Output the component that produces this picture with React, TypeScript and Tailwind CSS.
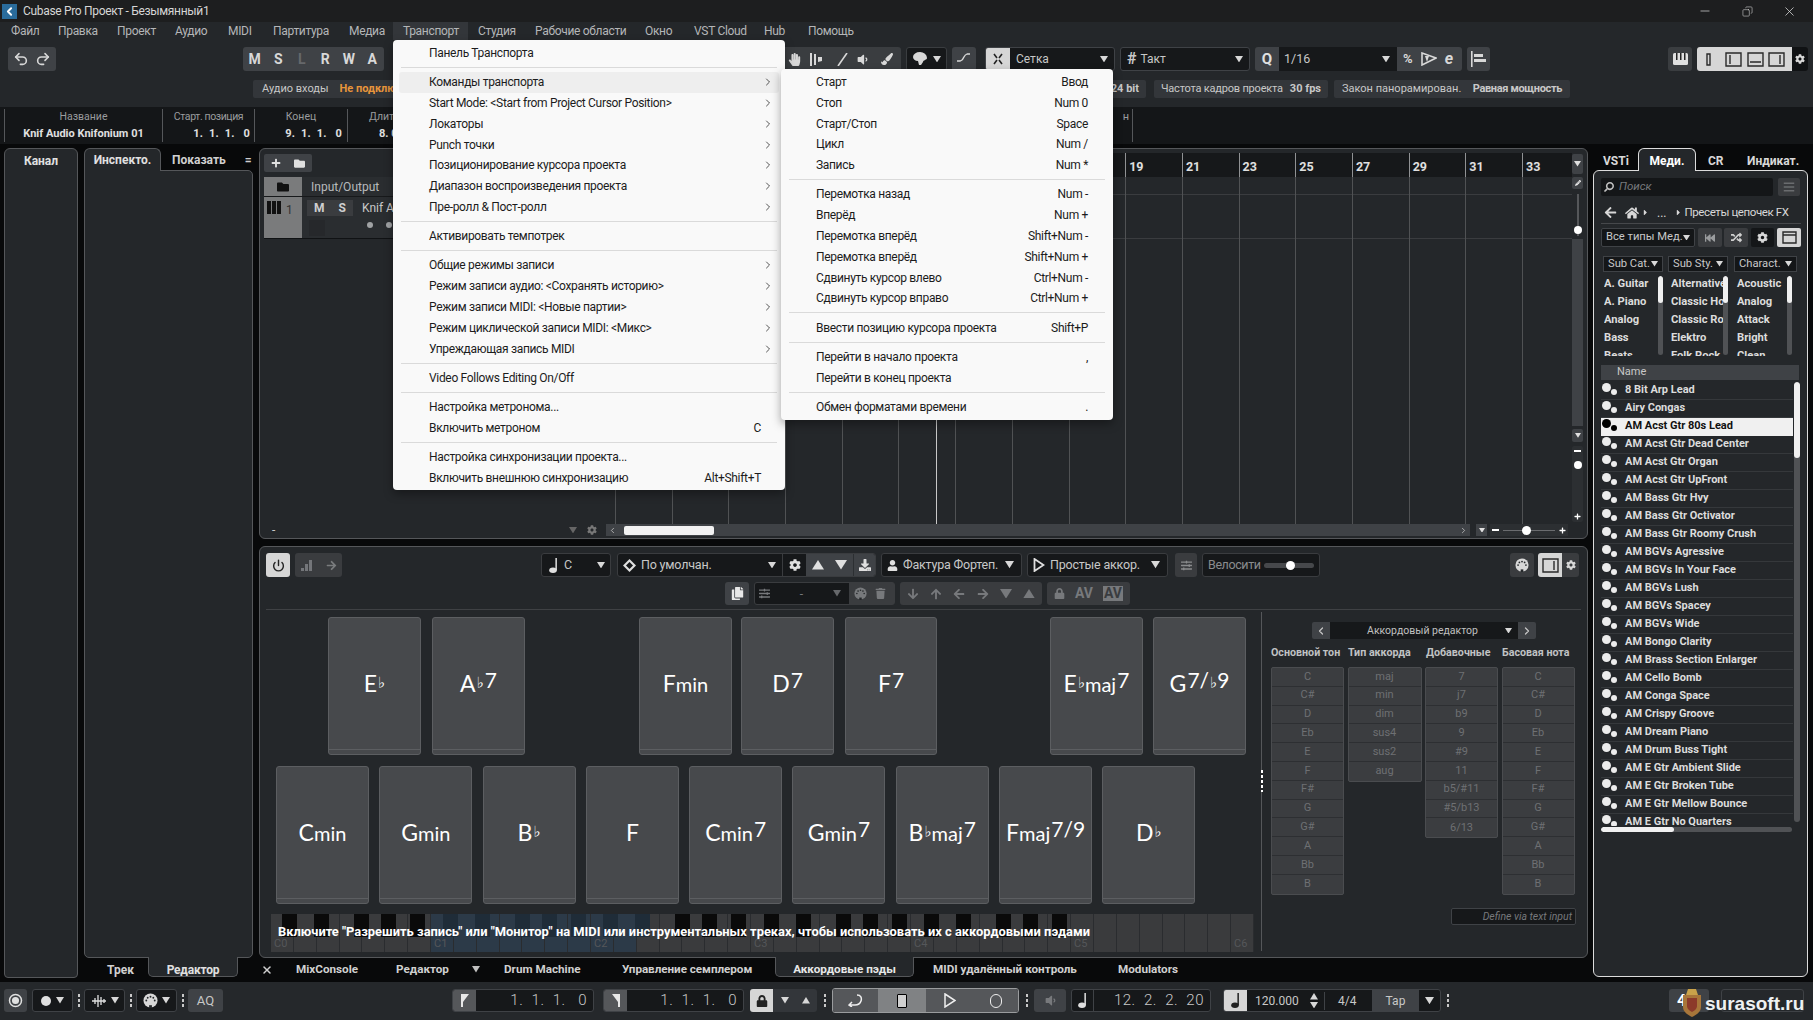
import React from "react";
import { Undo2, Redo2, Power, ChevronRight, X, Minus, Copy, ChevronLeft } from "lucide-react";
import { FaHandPaper, FaPencilAlt, FaVolumeDown, FaCog, FaHome, FaArrowLeft, FaArrowUp, FaArrowDown, FaArrowRight, FaLock, FaRandom, FaFastBackward, FaTrash, FaUser, FaPlus, FaFolder, FaCopy, FaDownload, FaSearch, FaCaretRight, FaBars, FaSlidersH, FaPaintBrush } from "react-icons/fa";

const Tri = ({ c = "#d8d8d8", up = false, s = 8 }: { c?: string; up?: boolean; s?: number }) => (
  <svg width={s} height={s * 0.8} viewBox="0 0 10 8" className="shrink-0"><path d={up ? "M5 0 10 8 0 8z" : "M0 0 10 0 5 8z"} fill={c} /></svg>
);
const Dots = () => (
  <span className="flex flex-col gap-[2px] w-[4px] items-center shrink-0">
    <i className="w-[2px] h-[3px] bg-[#c8c8c8]" /><i className="w-[2px] h-[3px] bg-[#c8c8c8]" /><i className="w-[2px] h-[3px] bg-[#c8c8c8]" />
  </span>
);
const Midi = ({ s = 16, c = "#d8d8d8" }: { s?: number; c?: string }) => (
  <svg width={s} height={s} viewBox="0 0 16 16"><circle cx="8" cy="8" r="7.5" fill={c} /><g fill="#25282b"><circle cx="3.5" cy="8" r="1" /><circle cx="12.5" cy="8" r="1" /><circle cx="5" cy="5" r="1" /><circle cx="11" cy="5" r="1" /><circle cx="8" cy="4" r="1" /></g><rect x="6.5" y="13" width="3" height="3" fill="#25282b" /></svg>
);
const Note = ({ c = "#e0e0e0", h = 16 }: { c?: string; h?: number }) => (
  <svg width={h * 0.6} height={h} viewBox="0 0 9 15" className="shrink-0"><ellipse cx="4" cy="12.300" rx="3.800" ry="2.700" fill={c} /><rect x="6.400" y="0" width="1.500" height="12" fill={c} /></svg>
);
const PanelIco = ({ d }: { d: string }) => (
  <svg width="17" height="15" viewBox="0 0 17 15" fill="none" stroke="#2a2a2a" strokeWidth="1.4"><path d={d} /></svg>
);

const menuBar: [string, string][] = [
  ["Файл", "w-[47px]"], ["Правка", "w-[59px]"], ["Проект", "w-[58px]"], ["Аудио", "w-[53px]"], ["MIDI", "w-[45px]"], ["Партитура", "w-[76px]"], ["Медиа", "w-[54px]"],
  ["Транспорт", "w-[75px] bg-[#33363a]"], ["Студия", "w-[57px]"], ["Рабочие области", "w-[110px]"], ["Окно", "w-[49px]"], ["VST Cloud", "w-[70px]"], ["Hub", "w-[44px]"], ["Помощь", "w-[60px]"],
];

type MI = { t?: string; r?: string; a?: boolean; h?: boolean } | null;
const menu1: MI[] = [
  { t: "Панель Транспорта" }, null,
  { t: "Команды транспорта", a: true, h: true }, { t: "Start Mode: <Start from Project Cursor Position>", a: true }, { t: "Локаторы", a: true }, { t: "Punch точки", a: true },
  { t: "Позиционирование курсора проекта", a: true }, { t: "Диапазон воспроизведения проекта", a: true }, { t: "Пре-ролл & Пост-ролл", a: true }, null,
  { t: "Активировать темпотрек" }, null,
  { t: "Общие режимы записи", a: true }, { t: "Режим записи аудио: <Сохранять историю>", a: true }, { t: "Режим записи MIDI: <Новые партии>", a: true }, { t: "Режим циклической записи MIDI: <Микс>", a: true }, { t: "Упреждающая запись MIDI", a: true }, null,
  { t: "Video Follows Editing On/Off" }, null,
  { t: "Настройка метронома..." }, { t: "Включить метроном", r: "C" }, null,
  { t: "Настройка синхронизации проекта..." }, { t: "Включить внешнюю синхронизацию", r: "Alt+Shift+T" },
];
const menu2: MI[] = [
  { t: "Старт", r: "Ввод" }, { t: "Стоп", r: "Num 0" }, { t: "Старт/Стоп", r: "Space" }, { t: "Цикл", r: "Num /" }, { t: "Запись", r: "Num *" }, null,
  { t: "Перемотка назад", r: "Num -" }, { t: "Вперёд", r: "Num +" }, { t: "Перемотка вперёд", r: "Shift+Num -" }, { t: "Перемотка вперёд", r: "Shift+Num +" }, { t: "Сдвинуть курсор влево", r: "Ctrl+Num -" }, { t: "Сдвинуть курсор вправо", r: "Ctrl+Num +" }, null,
  { t: "Ввести позицию курсора проекта", r: "Shift+P" }, null,
  { t: "Перейти в начало проекта", r: "," }, { t: "Перейти в конец проекта" }, null,
  { t: "Обмен форматами времени", r: "." },
];

const MenuList = ({ items, sub }: { items: MI[]; sub?: boolean }) => (
  <>
    {items.map((m, i) =>
      m ? (
        <div key={i} className={"h-[20.8px] flex items-center text-[12px] tracking-[-0.32px] text-[#1c1c1c] " + (m.h ? "bg-[#eeeeee] mx-[6px] pl-[30px] pr-[18px] rounded-[3px]" : sub ? "pl-[35px] pr-[25px]" : "pl-[36px] pr-[24px]")}>
          <span className="flex-1 whitespace-nowrap">{m.t}</span>
          {m.r && <span className="whitespace-nowrap">{m.r}</span>}
          {m.a && <ChevronRight size={12} strokeWidth={1.5} className="-mr-[13px]" />}
        </div>
      ) : (
        <div key={i} className="h-[8.4px] flex items-center px-[8px]"><div className="h-px w-full bg-[#dadada]" /></div>
      )
    )}
  </>
);

const Pad = ({ w = "w-[93px]", children }: { w?: string; children?: React.ReactNode }) => (
  <div className={w + " h-[138px] shrink-0 rounded-[3px] border border-[#5c5e61] bg-[#47494c] flex flex-col"}>
    <div className="flex-1 flex items-center justify-center text-white font-['Lato',sans-serif] text-[23px] whitespace-nowrap">{children}</div>
    <div className="h-[5px] border-t border-[#5c5e61]" />
  </div>
);
const Fl = () => <span className="text-[15px] font-['DejaVu_Sans',sans-serif] ml-[1px] relative top-[0px]">♭</span>;
const Sup = ({ children }: { children: React.ReactNode }) => <span className="text-[21px] relative -top-[4px] ml-[1px]">{children}</span>;
const Sm = ({ children }: { children: React.ReactNode }) => <span className="text-[20px]">{children}</span>;

const whiteKeys = Array.from({ length: 43 }, (_, i) => i);
const blackOff = [11, 43, 83, 110, 139];
const blackKeys = Array.from({ length: 5 }).flatMap((_, o) => blackOff.map((b) => b + o * 160.5));

const Col = ({ items, w = "w-[73px]" }: { items: string[]; w?: string }) => (
  <div className={w + " self-start rounded-[2px] border border-[#4a4c4f] bg-[#3b3d40]"}>
    {items.map((t, i) => (
      <div key={i} className={"h-[18.8px] flex items-center justify-center text-[11px] text-[#6e7073] " + (i < items.length - 1 ? "border-b border-[#2d2f32]" : "")}>{t}</div>
    ))}
  </div>
);

const presets = ["8 Bit Arp Lead", "Airy Congas", "AM Acst Gtr 80s Lead", "AM Acst Gtr Dead Center", "AM Acst Gtr Organ", "AM Acst Gtr UpFront", "AM Bass Gtr Hvy", "AM Bass Gtr Octivator", "AM Bass Gtr Roomy Crush", "AM BGVs Agressive", "AM BGVs In Your Face", "AM BGVs Lush", "AM BGVs Spacey", "AM BGVs Wide", "AM Bongo Clarity", "AM Brass Section Enlarger", "AM Cello Bomb", "AM Conga Space", "AM Crispy Groove", "AM Dream Piano", "AM Drum Buss Tight", "AM E Gtr Ambient Slide", "AM E Gtr Broken Tube", "AM E Gtr Mellow Bounce", "AM E Gtr No Quarters"];

const Filter = ({ items, w, lw, tx }: { items: string[]; w: string; lw: string; tx: string }) => (
  <div className={w + " flex h-[81px] overflow-hidden shrink-0"}>
    <div className={lw + " overflow-hidden " + tx}>
      {items.map((t) => <div key={t} className="h-[18px] leading-[18px] text-[11.2px] font-bold text-[#dcdcdc] whitespace-nowrap">{t}</div>)}
    </div>
    <div className="w-[5px] h-[79px] mt-[1px] rounded-full bg-[#505255] overflow-hidden"><div className="h-[27px] bg-[#f0f0f0] rounded-full" /></div>
  </div>
);

const bars = Array.from({ length: 17 }, (_, i) => 1 + i * 2);
const posCls = "flex-1 text-right pr-[6px] text-[15px] tracking-[0.5px] font-light whitespace-pre";

export default function App() {
  return (
    <div className="relative w-[1813px] h-[1020px] overflow-hidden bg-[#08090a] font-['Roboto',sans-serif] text-[12px] text-[#c8c8c8] flex flex-col">
      {/* title */}
      <div className="h-[22px] bg-[#1d1e1f] flex items-center shrink-0">
        <div className="ml-[2px] w-[15px] h-[15px] bg-[#2a6c9c] flex items-center justify-center"><ChevronLeft size={13} strokeWidth={3.5} color="#fff" /></div>
        <span className="ml-[6px] text-[#d6d6d6] tracking-[-0.32px]">Cubase Pro Проект - Безымянный1</span>
        <div className="flex-1" />
        <Minus size={14} strokeWidth={1.2} color="#ddd" />
        <Copy size={11} strokeWidth={1.2} color="#ddd" className="ml-[30px] -scale-x-100" />
        <X size={15} strokeWidth={1.2} color="#ddd" className="ml-[29px] mr-[16px]" />
      </div>
      {/* menu */}
      <div className="h-[22px] bg-[#24272a] flex pl-[1px] shrink-0 tracking-[-0.32px]">
        {menuBar.map(([t, c]) => <div key={t} className={"h-[18px] pl-[10px] flex items-center text-[#b4b6b8] whitespace-nowrap " + c}>{t}</div>)}
      </div>
      {/* toolbar */}
      <div className="h-[36px] bg-[#24272a] flex items-start pt-[3px] shrink-0">
        <div className="ml-[8px] w-[48px] h-[24px] rounded-[3px] bg-[#3f4246] flex items-center justify-around px-[2px] text-[#d8d8d8]"><Undo2 size={16} strokeWidth={2.4} /><Redo2 size={16} strokeWidth={2.4} /></div>
        <div className="ml-[187px] w-[141px] h-[24px] rounded-[3px] bg-[#3f4246] flex items-center text-[14px] font-bold text-[#d8d8d8]">
          <span className="w-[23.5px] text-center">M</span><span className="w-[23.5px] text-center">S</span><span className="w-[23.5px] text-center text-[#66686b]">L</span><span className="w-[23.5px] text-center">R</span><span className="w-[23.5px] text-center">W</span><span className="w-[23.5px] text-center">A</span>
        </div>
        <div className="ml-[376px] w-[141px] h-[24px] rounded-[3px] bg-[#3a3d40] flex items-center pl-[28px] text-[#d8d8d8]">
          <FaHandPaper size={13} />
          <svg width="14" height="13" viewBox="0 0 14 13" className="ml-[8px]"><path d="M1 0h2v13H1zM5 1h2v11H5zM9 4h4v4l-4 1z" fill="#d8d8d8" /></svg>
          <svg width="14" height="13" viewBox="0 0 14 13" className="ml-[13px]"><path d="M2 13 11 0" stroke="#d8d8d8" strokeWidth="1.6" /></svg>
          <FaVolumeDown size={13} className="ml-[6px]" />
          <FaPaintBrush size={12} className="ml-[12px]" />
        </div>
        <div className="ml-[5px] w-[41px] h-[24px] rounded-[3px] border border-[#3a3d40] bg-[#16181a] flex items-center justify-center gap-[5px]">
          <svg width="15" height="14" viewBox="0 0 15 14"><path d="M7 0a7 6 0 0 1 7 6c0 2-4 2-4 4l-2 3H6L5 9C2 9 0 7 0 5a7 5 0 0 1 7-5z" fill="#d8d8d8" /></svg><Tri />
        </div>
        <div className="ml-[5px] w-[24px] h-[24px] rounded-[3px] bg-[#3f4246] flex items-center justify-center">
          <svg width="16" height="14" viewBox="0 0 16 14" fill="none" stroke="#d8d8d8" strokeWidth="1.3"><path d="M1 9h3l2-1c2-2 2-5 5-6h3" /></svg>
        </div>
        <div className="ml-[9px] w-[130px] h-[24px] rounded-[3px] border border-[#3f4246] bg-[#16181a] flex items-center overflow-hidden">
          <div className="w-[24px] h-full bg-[#d6d6d6] flex items-center justify-center"><svg width="14" height="14" viewBox="0 0 14 14" stroke="#222" strokeWidth="1.6"><path d="M3 2l3 4M11 2 8 6M3 12l3-4M11 12 8 8" /></svg></div>
          <span className="ml-[6px] flex-1 text-[12px]">Сетка</span><span className="mr-[6px]"><Tri /></span>
        </div>
        <div className="ml-[5px] w-[130px] h-[24px] rounded-[3px] border border-[#3f4246] bg-[#16181a] flex items-center">
          <span className="ml-[6px] text-[16px] font-bold">#</span><span className="ml-[4px] flex-1 text-[12px]">Такт</span><span className="mr-[6px]"><Tri /></span>
        </div>
        <div className="ml-[5px] w-[207px] h-[24px] rounded-[3px] bg-[#3f4246] flex items-center overflow-hidden">
          <div className="w-[24px] text-center text-[15px] font-bold text-[#e0e0e0]">Q</div>
          <div className="w-[118px] h-full bg-[#16181a] flex items-center pl-[5px] text-[12.5px]"><span className="flex-1">1/16</span><span className="mr-[7px]"><Tri /></span></div>
          <span className="ml-[6px] text-[13px] font-bold text-[#d8d8d8]">%</span>
          <svg width="16" height="14" viewBox="0 0 16 14" className="ml-[8px]"><path d="M1 1 15 6 1 13z" fill="none" stroke="#d8d8d8" strokeWidth="1.6" /><path d="M4 4h4L6 10z" fill="#d8d8d8" /></svg>
          <span className="ml-[8px] text-[16px] font-bold italic text-[#d8d8d8]">e</span>
        </div>
        <div className="ml-[5px] w-[23px] h-[24px] rounded-[3px] bg-[#3f4246] flex items-center justify-center"><svg width="15" height="16" viewBox="0 0 15 16" fill="#d8d8d8"><path d="M0 0h1.6v16H0zM3 3h9v3H3zM3 8h12v3H3z" /></svg></div>
        <div className="ml-[178px] w-[24px] h-[24px] rounded-[3px] bg-[#3a3d40] flex items-center justify-center"><svg width="15" height="12" viewBox="0 0 15 12"><rect width="15" height="12" rx="1.5" fill="#e0e0e0" /><path d="M3 0v7h1.5V0zM7 0v7h1.5V0zM11 0v7h1.5V0z" fill="#222" /></svg></div>
        <div className="ml-[5px] w-[95px] h-[24px] rounded-l-[3px] bg-[#d6d6d6] flex items-center justify-around px-[5px]">
          <PanelIco d="M3 2h3v11H3z" /><PanelIco d="M1 1h15v13H1zM5 3v9" /><PanelIco d="M1 1h15v13H1zM3 10h11" /><PanelIco d="M1 1h15v13H1zM12 3v9" />
        </div>
        <div className="w-[16px] h-[24px] rounded-r-[3px] bg-[#101214] flex items-center justify-center"><FaCog size={10} color="#d8d8d8" /></div>
      </div>
      {/* chips */}
      <div className="h-[27px] bg-[#24272a] flex shrink-0 text-[11px]">
        <div className="ml-[253px] w-[893px] h-[18px] rounded-[2px] bg-[#33363a] flex items-center pl-[9px] pr-[7px]">
          <span>Аудио входы</span><span className="ml-[11px] font-bold text-[#e8953a]">Не подключено</span><span className="flex-1" /><span className="font-bold">24 bit</span>
        </div>
        <div className="ml-[8px] w-[174px] h-[18px] rounded-[2px] bg-[#33363a] flex items-center px-[7px]"><span className="flex-1 tracking-[-0.2px]">Частота кадров проекта</span><span className="font-bold">30 fps</span></div>
        <div className="ml-[6px] w-[236px] h-[18px] rounded-[2px] bg-[#33363a] flex items-center px-[8px]"><span className="flex-1">Закон панорамирован.</span><span className="font-bold tracking-[-0.35px]">Равная мощность</span></div>
      </div>
      {/* info */}
      <div className="h-[37px] bg-[#141618] flex items-center pl-[4px] shrink-0 text-[11px]">
        <div className="w-[158px] h-[33px] border-l border-[#55575a] flex flex-col items-center justify-between text-[#9a9c9e]"><span className="text-[10.5px]">Название</span><span className="font-bold text-[#e0e0e0]">Knif Audio Knifonium 01</span></div>
        <div className="w-[92px] h-[33px] border-l border-[#55575a] flex flex-col items-center justify-between text-[#9a9c9e]"><span className="text-[10.5px] tracking-[-0.4px]">Старт. позиция</span><span className="font-bold text-[#e0e0e0] whitespace-pre self-end pr-[4px] tracking-[0.2px]">1.  1.  1.   0</span></div>
        <div className="w-[93px] h-[33px] border-l border-[#55575a] flex flex-col items-center justify-between text-[#9a9c9e]"><span className="text-[10.5px]">Конец</span><span className="font-bold text-[#e0e0e0] whitespace-pre self-end pr-[5px] tracking-[0.2px]">9.  1.  1.   0</span></div>
        <div className="w-[786px] h-[33px] border-l border-r border-[#55575a] flex justify-between text-[#9a9c9e] pr-[3px]"><div className="pl-[21px] flex flex-col justify-between"><span className="text-[10.5px]">Длительность</span><span className="font-bold text-[#e0e0e0] pl-[10px]">8. 0. 0. 0</span></div><span>н</span></div>
      </div>
      {/* main */}
      <div className="flex-1 flex pt-[4px] pl-[4px] h-[838px]">
        <div className="w-[74px] h-[830px] rounded-t-[6px] rounded-b-[4px] border border-[#55575a] bg-[#24272a] text-center font-bold text-[#e0e0e0] pt-[3px]">Канал</div>
        {/* inspector */}
        <div className="ml-[6px] w-[169px] h-[830px] flex flex-col">
          <div className="h-[22px] flex relative z-10">
            <div className="w-[77px] h-[23px] rounded-t-[6px] border border-b-0 border-[#55575a] bg-[#24272a] text-center font-bold text-[#e0e0e0] pt-[2px]">Инспекто.</div>
            <span className="ml-[11px] pt-[3px] font-bold text-[#d0d0d0]">Показать</span><span className="ml-[19px] pt-[3px] font-bold text-[#d0d0d0]">=</span>
          </div>
          <div className="h-[788px] rounded-b-[5px] rounded-tr-[5px] border border-[#55575a] bg-[#24272a]" />
          <div className="h-[20px] flex relative -mt-px">
            <span className="ml-[9px] w-[55px] pt-[4px] text-center font-bold text-[#d0d0d0]">Трек</span>
            <div className="w-[90px] h-[20px] rounded-b-[5px] border border-t-0 border-[#55575a] bg-[#24272a] text-center font-bold text-[#e0e0e0] pt-[4px] tracking-[-0.2px]">Редактор</div>
          </div>
        </div>
        {/* center */}
        <div className="ml-[6px] w-[1329px] h-[830px] flex flex-col">
          {/* project */}
          <div className="h-[391px] rounded-[6px] border border-[#55575a] bg-[#24272a] flex flex-col shrink-0">
            <div className="h-[375px] flex">
              <div className="w-[344px] pl-[4px] pt-[5px] shrink-0">
                <div className="w-[48px] h-[18px] rounded-[2px] bg-[#3f4246] flex items-center justify-around text-[#e0e0e0]"><FaPlus size={10} /><FaFolder size={11} /></div>
                <div className="mt-[5px] h-[20px] flex bg-[#2a2d30] border-b border-[#17191b]">
                  <div className="w-[38px] bg-[#7a7b7c] flex items-center justify-center"><FaFolder size={12} color="#111" /></div>
                  <span className="ml-[9px] self-center text-[#b8babc]">Input/Output</span>
                </div>
                <div className="h-[42px] flex bg-[#2a2d30] border-b border-[#101214]">
                  <div className="w-[38px] bg-[#7a7b7c] flex pt-[4px] pl-[3px]">
                    <svg width="15" height="13" viewBox="0 0 15 13" fill="#111"><path d="M0 0h4v13H0zM5 0h4v13H5zM10 0h4v13h-4z" /></svg><span className="ml-[4px] text-[#333]">1</span>
                  </div>
                  <div className="ml-[5px] flex flex-col">
                    <div className="mt-[3px] w-[46px] h-[16px] bg-[#3a3c3f] flex items-center justify-around text-[12px] font-bold text-[#cfcfcf]"><span>M</span><span>S</span></div>
                    <div className="ml-[2px] mt-[4px] w-[16px] h-[16px] bg-[#26282b]" />
                  </div>
                  <div className="ml-[9px] mt-[2px] flex flex-col"><span className="text-[#c8c8c8]">Knif Audio</span><div className="mt-[5px] flex gap-[13px] pl-[5px]"><i className="w-[6px] h-[6px] rounded-full bg-[#a0a2a4]" /><i className="w-[6px] h-[6px] rounded-full bg-[#a0a2a4]" /></div></div>
                </div>
              </div>
              <div className="w-[968px] pt-[4px] shrink-0 flex flex-col">
                <div className="h-[24px] bg-[#16181a] flex pl-[11px] shrink-0">
                  {bars.map((b) => <div key={b} className="w-[56.7px] shrink-0 border-l border-[#909294] pl-[3px] pt-[5px] text-[12.5px] font-bold text-[#e0e0e0]">{b}</div>)}
                </div>
                <div className="relative flex-1">
                  <div className="h-[18px] border-b border-[#3a3c3f]" />
                  <div className="h-[44px] border-b border-[#3a3c3f]" />
                  <div className="absolute inset-0 flex pl-[11px]">
                    {bars.map((b) => <div key={b} className="w-[56.7px] shrink-0 border-l border-[#505254]" />)}
                  </div>
                  <div className="absolute top-0 bottom-0 left-[332px] w-px bg-[#c8c8c8]" />
                </div>
              </div>
              <div className="w-[11px] pt-[5px] flex flex-col items-center shrink-0">
                <div className="w-[11px] h-[20px] rounded-[2px] bg-[#3f4246] flex items-center justify-center"><Tri c="#e0e0e0" s={7} /></div>
                <div className="mt-[3px] w-[11px] h-[12px] rounded-[2px] bg-[#3f4246] flex items-center justify-center"><FaPencilAlt size={6} color="#eee" /></div>
                <div className="relative mt-[5px] w-[2px] h-[42px] bg-[#55575a]"><div className="absolute -left-[3px] top-[32px] w-[8px] h-[8px] rounded-full bg-white" /></div>
                <div className="mt-[3px] w-[11px] h-[187px] bg-[#3f4246]" />
                <div className="mt-[3px] w-[11px] h-[13px] rounded-[2px] bg-[#3f4246] flex items-center justify-center"><Tri c="#e0e0e0" s={6} /></div>
                <div className="relative mt-[4px] w-[11px] h-[76px] rounded-[2px] bg-[#2c2f32] flex flex-col items-center justify-between py-[2px] text-white">
                  <span className="w-[7px] h-[2px] mt-[2px] bg-white" /><FaPlus size={7} />
                  <div className="absolute top-[15px] w-[8px] h-[8px] rounded-full bg-white" />
                </div>
              </div>
            </div>
            <div className="h-[12px] flex items-center shrink-0 relative">
              <span className="ml-[12px] w-[297px]">-</span>
              <Tri c="#666" s={8} /><FaCog size={10} color="#777" className="ml-[10px]" />
              <div className="ml-[9px] w-[864px] h-[12px] bg-[#3f4246] flex items-center">
                <ChevronLeft size={9} className="ml-[2px]" />
                <div className="ml-[7px] w-[90px] h-[9px] rounded-[2px] bg-[#f2f2f2]" />
                <div className="flex-1" />
                <ChevronRight size={9} className="mr-[2px]" />
              </div>
              <div className="ml-[6px] w-[11px] h-[12px] bg-[#3f4246] flex items-center justify-center"><Tri c="#e0e0e0" s={6} /></div>
              <div className="relative ml-[3px] w-[78px] h-[12px] bg-[#2c2f32] flex items-center justify-between px-[2px]">
                <span className="w-[7px] h-[2px] bg-white" /><i className="flex-1 h-px mx-[4px] bg-[#6a6c6f]" /><FaPlus size={7} color="#fff" />
                <div className="absolute left-[32px] w-[9px] h-[9px] rounded-full bg-white" />
              </div>
            </div>
          </div>
          {/* lower */}
          <div className="mt-[7px] h-[412px] rounded-[6px] border border-[#55575a] bg-[#24272a] shrink-0 flex flex-col pt-[6px]">
            <div className="h-[24px] flex shrink-0 text-[12.5px] tracking-[-0.2px]">
              <div className="ml-[6px] w-[24px] rounded-[3px] bg-[#d6d6d6] flex items-center justify-center"><Power size={13} strokeWidth={2.6} color="#222" /></div>
              <div className="ml-[5px] w-[47px] rounded-[3px] bg-[#3a3c3f] flex items-center justify-around text-[#7a7c7e]"><svg width="14" height="12" viewBox="0 0 14 12" fill="#74767a"><path d="M0 9h3v3H0zM4 5h3v7H4zM8 1h3v11H8z" /></svg><FaArrowRight size={11} /></div>
              <div className="ml-[199px] w-[70px] rounded-[3px] border border-[#3a3c3f] bg-[#16181a] flex items-center pl-[7px] pr-[5px]"><Note h={15} /><span className="ml-[6px] flex-1">C</span><Tri /></div>
              <div className="ml-[6px] w-[259px] rounded-[3px] border border-[#3a3c3f] bg-[#16181a] flex items-center overflow-hidden">
                <svg width="13" height="13" viewBox="0 0 13 13" className="ml-[5px]"><path d="M6.5 0 13 6.5 6.5 13 0 6.5z" fill="#e0e0e0" /><path d="M6.5 3 10 6.5 6.5 10 3 6.5z" fill="#16181a" /></svg>
                <span className="ml-[5px] w-[127px]">По умолчан.</span><Tri />
                <div className="ml-[6px] w-[24px] h-full border-l border-[#3a3c3f] flex items-center justify-center"><FaCog size={12} color="#e0e0e0" /></div>
                <div className="w-[47px] h-full bg-[#3f4246] flex items-center justify-around"><Tri up c="#e0e0e0" s={12} /><Tri c="#e0e0e0" s={12} /></div>
                <div className="flex-1 h-full bg-[#3f4246] border-l border-[#2c2f32] flex items-center justify-center"><FaDownload size={12} color="#e0e0e0" /></div>
              </div>
              <div className="ml-[5px] w-[141px] rounded-[3px] border border-[#3a3c3f] bg-[#16181a] flex items-center pl-[5px] pr-[7px]"><FaUser size={11} color="#e0e0e0" /><span className="ml-[5px] flex-1 whitespace-nowrap">Фактура Фортеп.</span><Tri s={9} /></div>
              <div className="ml-[5px] w-[141px] rounded-[3px] border border-[#3a3c3f] bg-[#16181a] flex items-center pl-[5px] pr-[7px]"><svg width="12" height="14" viewBox="0 0 12 14" fill="none" stroke="#e0e0e0" strokeWidth="1.8"><path d="M1.500 1 10.500 7 1.500 13z" /></svg><span className="ml-[5px] flex-1 whitespace-nowrap">Простые аккор.</span><Tri s={9} /></div>
              <div className="ml-[7px] w-[22px] rounded-[3px] bg-[#3a3c3f] flex items-center justify-center"><FaSlidersH size={11} color="#8a8c8e" /></div>
              <div className="ml-[5px] w-[118px] rounded-[3px] border border-[#3a3c3f] bg-[#16181a] flex items-center pl-[5px] text-[#8a8c8e]"><span className="tracking-[-0.4px]">Велосити</span><div className="relative ml-[3px] w-[50px] h-[5px] rounded-full bg-[#46484b]"><i className="absolute left-[22px] -top-[2px] w-[9px] h-[9px] rounded-full bg-white" /></div></div>
              <div className="ml-[190px] w-[24px] rounded-[3px] bg-[#3a3c3f] flex items-center justify-center"><Midi s={14} /></div>
              <div className="ml-[4px] w-[24px] rounded-l-[3px] bg-[#d6d6d6] flex items-center justify-center"><PanelIco d="M1 1h15v13H1zM12 3v9" /></div>
              <div className="w-[17px] rounded-r-[3px] bg-[#3a3c3f] flex items-center justify-center"><FaCog size={10} color="#d8d8d8" /></div>
            </div>
            <div className="mt-[5px] h-[23px] flex shrink-0">
              <div className="ml-[465px] w-[24px] rounded-[3px] bg-[#3f4246] flex items-center justify-center"><FaCopy size={13} color="#e8e8e8" /></div>
              <div className="ml-[5px] w-[141px] rounded-[3px] border border-[#3a3c3f] bg-[#3a3c3f] flex items-center overflow-hidden">
                <div className="w-[94px] h-full bg-[#16181a] flex items-center pl-[4px] pr-[8px] text-[#77797c]"><FaSlidersH size={11} /><span className="flex-1 text-center">-</span><Tri c="#66686b" /></div>
                <span className="ml-[5px]"><Midi s={13} c="#77797c" /></span><FaTrash size={11} color="#77797c" className="ml-[8px]" />
              </div>
              <div className="ml-[5px] w-[142px] rounded-[3px] bg-[#3a3c3f] flex items-center justify-around px-[1px] text-[#77797c]">
                <FaArrowDown size={12} /><FaArrowUp size={12} /><FaArrowLeft size={12} /><FaArrowRight size={12} /><Tri c="#77797c" s={12} /><Tri up c="#77797c" s={12} />
              </div>
              <div className="ml-[5px] w-[83px] rounded-[3px] bg-[#3a3c3f] flex items-center justify-around px-[2px] text-[#77797c] font-bold text-[14px]"><FaLock size={11} /><span>AV</span><span className="bg-[#77797c] text-[#3a3c3f] px-[1px] leading-[15px]">AV</span></div>
            </div>
            <div className="mt-[4px] mx-[6px] h-px bg-[#3f4144] shrink-0" />
            <div className="flex-1 flex min-h-0">
              <div className="w-[1000px] shrink-0 flex flex-col">
                <div className="mt-[7px] flex pl-[68px]">
                  <Pad>E<Fl /></Pad>
                  <div className="ml-[11px]"><Pad>A<Fl /><Sup>7</Sup></Pad></div>
                  <div className="ml-[114px]"><Pad>F<Sm>min</Sm></Pad></div>
                  <div className="ml-[9px]"><Pad>D<Sup>7</Sup></Pad></div>
                  <div className="ml-[11px]"><Pad w="w-[92px]">F<Sup>7</Sup></Pad></div>
                  <div className="ml-[113px]"><Pad>E<Fl /><Sm>maj</Sm><Sup>7</Sup></Pad></div>
                  <div className="ml-[10px]"><Pad>G<Sup>7/<Fl />9</Sup></Pad></div>
                </div>
                <div className="mt-[11px] flex pl-[16px] gap-[10.3px]">
                  <Pad>C<Sm>min</Sm></Pad><Pad>G<Sm>min</Sm></Pad><Pad>B<Fl /></Pad><Pad>F</Pad><Pad>C<Sm>min</Sm><Sup>7</Sup></Pad><Pad>G<Sm>min</Sm><Sup>7</Sup></Pad><Pad>B<Fl /><Sm>maj</Sm><Sup>7</Sup></Pad><Pad>F<Sm>maj</Sm><Sup>7/9</Sup></Pad><Pad>D<Fl /></Pad>
                </div>
                <div className="relative mt-[10px] ml-[11px] w-[983px] h-[38px] flex overflow-hidden">
                  {whiteKeys.map((i) => (
                    <div key={i} className={"w-[22.86px] shrink-0 border-r border-[#2a2c2f] flex items-end pl-[3px] text-[11px] leading-[17px] text-[#55575a] " + (i >= 7 && i < 16 ? "bg-[#2c3a48]" : "bg-[#3a3b3d]")}>
                      {i % 7 === 0 ? "C" + i / 7 : ""}
                    </div>
                  ))}
                  {blackKeys.map((x, i) => (
                    <div key={i} className={"absolute top-0 w-[15px] h-[23px] " + (x > 162 && x < 370 ? "bg-[#1f2c38]" : "bg-[#0a0a0a]")} style={{ left: x }} />
                  ))}
                  <div className="absolute left-[7px] top-[10px] text-[12.9px] leading-[16px] font-bold text-white whitespace-nowrap">Включите "Разрешить запись" или "Монитор" на MIDI или инструментальных треках, чтобы использовать их с аккордовыми пэдами</div>
                </div>
              </div>
              <div className="relative ml-px w-[326px] mt-[2px] mb-[6px] border-l border-[#55575a] flex flex-col pt-[10px]">
                <div className="absolute -left-[1px] top-[158px] w-[2px] h-[22px] bg-[repeating-linear-gradient(#fff_0_3px,#24272a_3px_5px)]" />
                <div className="ml-[50px] w-[224px] h-[17px] rounded-[2px] bg-[#3f4246] flex items-center shrink-0">
                  <ChevronLeft size={12} strokeWidth={2.4} className="mx-[3px]" />
                  <div className="flex-1 h-full bg-[#16181a] flex items-center text-[10.5px] text-[#c0c0c0]"><span className="flex-1 text-center pl-[10px]">Аккордовый редактор</span><span className="mr-[6px]"><Tri s={7} /></span></div>
                  <ChevronRight size={12} strokeWidth={2.4} className="mx-[3px]" />
                </div>
                <div className="mt-[6px] h-[16px] flex items-center ml-[9px] text-[10.7px] font-bold text-[#c0c2c4] whitespace-nowrap">
                  <span className="w-[77px]">Основной тон</span><span className="w-[78px]">Тип аккорда</span><span className="w-[76px]">Добавочные</span><span>Басовая нота</span>
                </div>
                <div className="mt-[6px] h-[241px] flex ml-[9px] gap-[3.5px] shrink-0">
                  <Col items={["C", "C#", "D", "Eb", "E", "F", "F#", "G", "G#", "A", "Bb", "B"]} />
                  <Col w="w-[74px]" items={["maj", "min", "dim", "sus4", "sus2", "aug"]} />
                  <Col items={["7", "j7", "b9", "9", "#9", "11", "b5/#11", "#5/b13", "6/13"]} />
                  <Col items={["C", "C#", "D", "Eb", "E", "F", "F#", "G", "G#", "A", "Bb", "B"]} />
                </div>
                <div className="ml-[189px] w-[125px] h-[17px] rounded-[2px] border border-[#3f4246] bg-[#16181a] flex items-center justify-end pr-[3px] text-[10.5px] italic text-[#77797c]">Define via text input</div>
              </div>
            </div>
          </div>
          {/* lower tabs */}
          <div className="h-[20px] flex items-center relative -mt-px pt-[5px] font-bold text-[#d0d0d0] text-[11.7px]">
            <X size={12} strokeWidth={3} className="ml-[2px]" />
            <span className="ml-[23px] w-[101px]">MixConsole</span><span className="-ml-[1px] w-[76px]">Редактор</span><Tri c="#c0c0c0" /><span className="ml-[24px] w-[118px]">Drum Machine</span><span className="w-[153px] tracking-[-0.05px]">Управление семплером</span>
            <div className="self-start -mt-[5px] h-[20px] w-[139px] rounded-b-[5px] border border-t-0 border-[#55575a] bg-[#24272a] text-center text-[#e8e8e8] pt-[4px]">Аккордовые пэды</div>
            <span className="ml-[19px] w-[185px]">MIDI удалённый контроль</span><span>Modulators</span>
          </div>
        </div>
        {/* right */}
        <div className="ml-[5px] w-[215px] h-[830px] flex flex-col">
          <div className="h-[22px] flex relative z-10 font-bold text-[12px] text-[#d8d8d8]">
            <span className="ml-[10px] w-[35px] pt-[4px]">VSTi</span>
            <div className="w-[58px] h-[23px] rounded-t-[6px] border-[1.5px] border-b-0 border-[#dcdcdc] bg-[#24272a] text-center text-white pt-[3px]">Меди.</div>
            <span className="ml-[12px] w-[39px] pt-[4px]">CR</span><span className="pt-[4px]">Индикат.</span>
          </div>
          <div className="h-[807px] rounded-[6px] border-[1.5px] border-[#dcdcdc] bg-[#24272a] pl-[7px] pt-[7px] flex flex-col">
            <div className="h-[18px] flex shrink-0">
              <div className="w-[172px] rounded-[2px] bg-[#141618] flex items-center pl-[3px] italic text-[#77797c] text-[11.5px]"><FaSearch size={10} color="#c0c0c0" className="-scale-x-100" /><span className="ml-[5px]">Поиск</span></div>
              <div className="ml-[5px] w-[22px] rounded-[2px] bg-[#3a3c3f] flex items-center justify-center"><FaBars size={12} color="#6a6c6f" /></div>
            </div>
            <div className="mt-[6px] h-[22px] w-[200px] flex items-center shrink-0 border-b border-[#46484b] text-[#d8d8d8]">
              <FaArrowLeft size={13} className="ml-[3px]" /><FaHome size={14} className="ml-[8px]" /><FaCaretRight size={9} className="ml-[2px]" /><span className="ml-[7px]">...</span><FaCaretRight size={9} className="ml-[7px]" /><span className="ml-[2px] whitespace-nowrap text-[11.5px] tracking-[-0.4px]">Пресеты цепочек FX</span>
            </div>
            <div className="mt-[4px] h-[19px] flex shrink-0">
              <div className="w-[94px] rounded-[2px] border border-[#3f4246] bg-[#141618] flex items-center pl-[4px] pr-[5px] text-[11.2px]"><span className="flex-1 whitespace-nowrap">Все типы Мед.</span><Tri s={7} /></div>
              <div className="ml-[3px] w-[24px] rounded-[2px] bg-[#3a3c3f] flex items-center justify-center"><FaFastBackward size={10} color="#9a9c9e" /></div>
              <div className="ml-[2px] w-[24px] rounded-[2px] bg-[#3a3c3f] flex items-center justify-center"><FaRandom size={11} color="#d0d0d0" /></div>
              <div className="ml-[3px] w-[23px] rounded-[2px] bg-[#141618] flex items-center justify-center"><FaCog size={11} color="#d8d8d8" /></div>
              <div className="ml-[3px] w-[24px] rounded-[2px] bg-[#d6d6d6] flex items-center justify-center"><PanelIco d="M2 2h13v11H2zM2 5h13" /></div>
            </div>
            <div className="mt-[9px] h-[16px] flex shrink-0 ml-[2px] text-[11.2px]">
              <div className="w-[60px] border border-[#3f4246] bg-[#141618] flex items-center px-[4px]"><span className="flex-1">Sub Cat.</span><Tri s={7} /></div>
              <div className="ml-[5px] w-[60px] border border-[#3f4246] bg-[#141618] flex items-center px-[4px]"><span className="flex-1">Sub Sty.</span><Tri s={7} /></div>
              <div className="ml-[6px] w-[63px] border border-[#3f4246] bg-[#141618] flex items-center px-[4px]"><span className="flex-1">Charact.</span><Tri s={7} /></div>
            </div>
            <div className="mt-[3px] h-[84px] flex shrink-0 ml-[3px]">
              <Filter w="w-[67px]" lw="w-[54px]" tx="pr-0" items={["A. Guitar", "A. Piano", "Analog", "Bass", "Beats"]} />
              <Filter w="w-[63px]" lw="w-[52px]" tx="" items={["Alternative", "Classic House", "Classic Rock", "Elektro", "Folk Rock"]} />
              <Filter w="w-[67px]" lw="w-[53px]" tx="pl-[3px]" items={["Acoustic", "Analog", "Attack", "Bright", "Clean"]} />
            </div>
            <div className="mt-[6px] h-[15px] w-[198px] bg-[#3f4246] flex items-center pl-[16px] text-[11px] shrink-0">Name</div>
            <div className="mt-[2px] h-[444px] w-[199px] flex shrink-0 overflow-hidden">
              <div className="w-[192px] shrink-0">
                {presets.map((p, i) => (
                  <div key={p} className={"relative h-[18px] flex items-center pl-[24px] text-[11px] font-bold whitespace-nowrap border-b " + (i === 2 ? "bg-[#f0f0f0] text-[#111] border-[#f0f0f0]" : "text-[#dcdcdc] border-[#35383b]")}>
                    <i className={"absolute left-[1px] top-[1px] w-[9px] h-[9px] rounded-full " + (i === 2 ? "bg-black" : "bg-[#ececec]")} />
                    <i className={"absolute left-[10px] top-[7px] w-[6px] h-[6px] rounded-full " + (i === 2 ? "bg-black" : "bg-[#ececec]")} />
                    {p}
                  </div>
                ))}
              </div>
              <div className="ml-px w-[6px] h-[440px] rounded-full bg-[#505255] overflow-hidden"><div className="h-[76px] rounded-full bg-[#f0f0f0]" /></div>
            </div>
            <div className="mt-[1px] w-[191px] h-[5px] rounded-full bg-[#505255] overflow-hidden"><div className="w-[73px] h-full rounded-full bg-[#f0f0f0]" /></div>
          </div>
        </div>
      </div>
      {/* transport */}
      <div className="h-[38px] bg-[#25282b] flex pt-[7px] shrink-0 text-[#c8c8c8]">
        <div className="ml-[4px] w-[23px] h-[23px] rounded-[3px] bg-[#3f4246] flex items-center justify-center"><svg width="15" height="15" viewBox="0 0 15 15" fill="none" stroke="#e0e0e0" strokeWidth="1.5"><circle cx="7.500" cy="7.500" r="6" /><circle cx="7.500" cy="7.500" r="2.800" fill="#e0e0e0" /></svg></div>
        <div className="ml-[5px] w-[41px] h-[23px] rounded-[3px] border border-[#3f4246] bg-[#16181a] flex items-center justify-center gap-[5px]"><span className="w-[10px] h-[10px] rounded-full bg-[#e0e0e0]" /><Tri /></div>
        <div className="ml-[1px] w-[10px] h-[23px] flex items-center justify-center"><Dots /></div>
        <div className="w-[41px] h-[23px] rounded-[3px] border border-[#3f4246] bg-[#16181a] flex items-center justify-center gap-[4px]"><svg width="16" height="14" viewBox="0 0 16 14" stroke="#e0e0e0" strokeWidth="1.3"><path d="M1 7h14M4 4v6M7 1v12M10 3v8M13 5v4" /></svg><Tri /></div>
        <div className="w-[11px] h-[23px] flex items-center justify-center"><Dots /></div>
        <div className="w-[41px] h-[23px] rounded-[3px] border border-[#3f4246] bg-[#16181a] flex items-center justify-center gap-[4px]"><Midi s={15} /><Tri /></div>
        <div className="w-[11px] h-[23px] flex items-center justify-center"><Dots /></div>
        <div className="w-[35px] h-[23px] rounded-[3px] bg-[#3f4246] flex items-center justify-center text-[13px]">AQ</div>
        <div className="ml-[229px] w-[142px] h-[23px] rounded-[3px] border border-[#3f4246] bg-[#16181a] flex items-center overflow-hidden">
          <div className="w-[23px] h-full bg-[#55575a] flex items-center justify-center"><svg width="8" height="13" viewBox="0 0 8 13" fill="#e8e8e8"><path d="M0 0h8L2 8v5H0z" /></svg></div>
          <span className={posCls}>1.  1.  1.   0</span>
        </div>
        <div className="ml-[9px] w-[141px] h-[23px] rounded-[3px] border border-[#3f4246] bg-[#16181a] flex items-center overflow-hidden">
          <div className="w-[23px] h-full bg-[#55575a] flex items-center justify-center"><svg width="8" height="13" viewBox="0 0 8 13" fill="#e8e8e8"><path d="M8 0H0l6 8v5h2z" /></svg></div>
          <span className={posCls}>1.  1.  1.   0</span>
        </div>
        <div className="ml-[6px] w-[67px] h-[23px] rounded-[3px] bg-[#33363a] flex items-center overflow-hidden">
          <div className="w-[23px] h-full bg-[#d6d6d6] flex items-center justify-center"><FaLock size={12} color="#222" /></div>
          <span className="ml-[8px]"><Tri s={8} /></span><span className="ml-[13px]"><Tri up s={8} /></span>
        </div>
        <div className="ml-[3px] w-[9px] h-[23px] flex items-center justify-center"><Dots /></div>
        <div className="ml-[3px] w-[187px] h-[25px] -mt-px rounded-[3px] border border-[#9a9c9e] flex overflow-hidden">
          <div className="w-[45px] bg-[#55575a] flex items-center justify-center"><svg width="16" height="13" viewBox="0 0 16 13" fill="none" stroke="#eee" strokeWidth="1.500"><path d="M9 1c4 0 5 3 4 6s-3 4-6 4H1M4 8l-3 3 3 2" /></svg></div>
          <div className="w-[48px] bg-[#808284] flex items-center justify-center"><span className="w-[10px] h-[14px] border-[1.5px] border-black bg-[#d0d0d0] rounded-[1px]" /></div>
          <div className="w-[47px] bg-[#55575a] flex items-center justify-center"><svg width="12" height="15" viewBox="0 0 12 15" fill="none" stroke="#eee" strokeWidth="1.500"><path d="M1 1l10 6.500L1 14z" /></svg></div>
          <div className="flex-1 bg-[#55575a] flex items-center justify-center"><span className="w-[12px] h-[14px] rounded-full border-[1.5px] border-[#eee]" /></div>
        </div>
        <div className="w-[15px] h-[23px] flex items-center justify-center"><Dots /></div>
        <div className="w-[32px] h-[23px] rounded-[3px] bg-[#3f4246] flex items-center justify-center"><FaVolumeDown size={13} color="#77797c" /></div>
        <div className="ml-[5px] w-[140px] h-[23px] rounded-[3px] border border-[#3f4246] bg-[#16181a] flex items-center overflow-hidden">
          <span className="w-[21px] flex justify-center"><Note h={15} /></span>
          <span className={posCls + " border-l border-[#3f4246]"}>12.  2.  2.  20</span>
        </div>
        <div className="ml-[12px] w-[218px] h-[23px] rounded-[3px] border border-[#3f4246] bg-[#16181a] flex items-center overflow-hidden">
          <div className="w-[23px] h-full bg-[#d6d6d6] flex items-center justify-center"><Note h={15} c="#222" /></div>
          <span className="w-[57px] pl-[8px] text-[12px]">120.000</span>
          <span className="w-[20px] flex flex-col gap-[2px] items-center"><Tri up s={8} /><Tri s={8} /></span>
          <span className="w-[48px] pl-[13px] text-[12px] border-l border-[#3f4246]">4/4</span>
          <span className="w-[47px] h-full bg-[#3f4246] flex items-center justify-center text-[12px]">Tap</span>
          <span className="flex-1 flex justify-center"><Tri s={9} /></span>
        </div>
        <div className="ml-[2px] w-[9px] h-[23px] flex items-center justify-center"><Dots /></div>
        <div className="ml-[217px] w-[40px] h-[23px] rounded-[3px] bg-[#3f4246] flex items-center pl-[8px] text-white text-[16px] font-bold">4</div>
        <div className="ml-[12px] w-[83px] h-[23px] rounded-[3px] border border-[#3f4246]" />
      </div>
      {/* watermark */}
      <div className="absolute left-[1680px] top-[988px] flex items-center pointer-events-none">
        <svg width="24" height="30" viewBox="0 0 24 30"><path d="M3 7h18v12c0 5-5 8-9 10-4-2-9-5-9-10z" fill="#a8763a" /><path d="M7 10h10v8c0 3-3 5-5 6-2-1-5-3-5-6z" fill="#8c3a2a" /><path d="M8 1h8l2 6H6z" fill="#c9a24a" /></svg>
        <span className="text-[19px] font-bold text-[#eef1f2] ml-[1px] font-['Liberation_Sans',sans-serif] leading-none">surasoft.ru</span>
      </div>
      {/* menus */}
      <div className="absolute left-[393px] top-[40px] w-[392px] h-[450px] bg-[#f9f9f9] rounded-[4px] shadow-[0_4px_10px_rgba(0,0,0,0.35)] py-[2.6px] z-20">
        <MenuList items={menu1} />
      </div>
      <div className="absolute left-[781px] top-[69px] w-[332px] h-[351px] bg-[#f9f9f9] rounded-[4px] shadow-[0_4px_10px_rgba(0,0,0,0.35)] py-[2.6px] z-30">
        <MenuList items={menu2} sub />
      </div>
    </div>
  );
}
